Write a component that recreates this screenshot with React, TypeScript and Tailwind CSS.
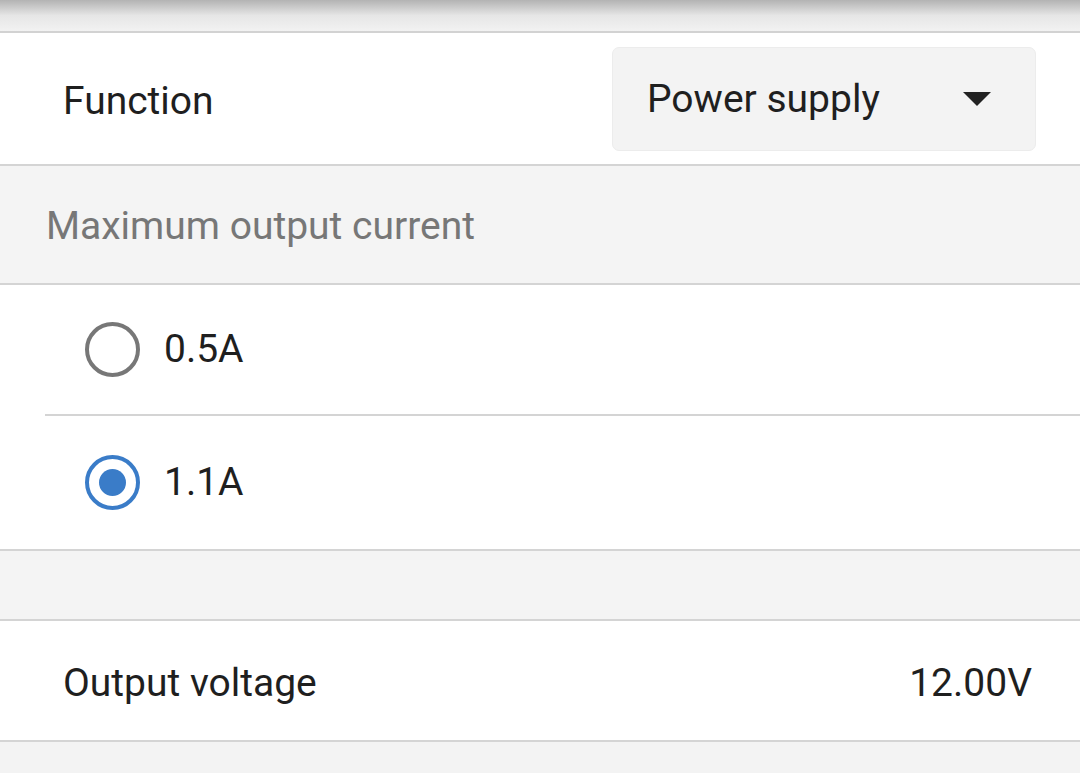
// Power supply settings screen

import { useState } from 'react'

const font = { fontFamily: "Roboto, 'Noto Sans', sans-serif" }

function Radio({ checked }: { checked: boolean }) {
    return (
        <span
            className={`flex items-center justify-center w-[55px] h-[55px] rounded-full border-[4px] shrink-0 ${
                checked ? 'border-[#3a7cc8]' : 'border-[#777777]'
            }`}
        >
            {checked && <span className="block w-[27px] h-[27px] rounded-full bg-[#3a7cc8]" />}
        </span>
    )
}

export default function App() {
    const [current, setCurrent] = useState('1.1A')

    const options = ['0.5A', '1.1A']

    return (
        <div className="w-[1080px] h-[773px] overflow-hidden bg-[#f3f3f3] text-[#1f1f1f]" style={font}>
            {/* top shadow strip */}
            <div className="h-[33px] bg-gradient-to-b from-[#b3b3b3] via-[#e6e6e6] to-[#f2f2f2] border-b-2 border-[#d2d2d2]" />

            {/* Function */}
            <div className="flex items-center justify-between h-[133px] bg-white border-b-2 border-[#d4d4d4] pl-[63px] pr-[44px]">
                <span className="text-[39px] pt-[5px]">Function</span>
                <button className="flex items-center justify-between w-[424px] h-[104px] rounded-[7px] bg-[#f3f3f3] border border-[#ececec] pl-[34px] pr-[44px]">
                    <span className="text-[39px] text-[#1f1f1f] pt-[2px]">Power supply</span>
                    <svg width="28" height="14" viewBox="0 0 28 14">
                        <path d="M0 0 L28 0 L14 14 Z" fill="#222" />
                    </svg>
                </button>
            </div>

            {/* Section header */}
            <div className="flex items-center h-[119px] bg-[#f4f4f4] border-b-2 border-[#d4d4d4] pl-[46px]">
                <span className="text-[39px] text-[#777777] pt-[3px]">Maximum output current</span>
            </div>

            {/* Options */}
            <div className="bg-white border-b-2 border-[#d4d4d4]">
                {options.map((opt, i) => (
                    <div key={opt} className="pl-[45px]">
                        <button
                            onClick={() => setCurrent(opt)}
                            className={`flex items-center gap-[24px] w-full pl-[40px] ${
                                i === 0 ? 'h-[131px] border-b-2 border-[#d4d4d4]' : 'h-[133px]'
                            }`}
                        >
                            <Radio checked={current === opt} />
                            <span className="text-[39px]">{opt}</span>
                        </button>
                    </div>
                ))}
            </div>

            {/* spacer */}
            <div className="h-[70px] bg-[#f4f4f4] border-b-2 border-[#d4d4d4]" />

            {/* Output voltage */}
            <div className="flex items-center justify-between h-[121px] bg-white border-b-2 border-[#d4d4d4] pl-[63px] pr-[48px] pt-[5px]">
                <span className="text-[39px]">Output voltage</span>
                <span className="text-[39px]">12.00V</span>
            </div>
        </div>
    )
}
